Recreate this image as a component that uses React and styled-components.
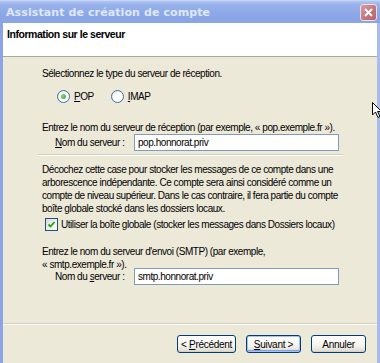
import React from "react";
import styled, { createGlobalStyle } from "styled-components";

const Global = createGlobalStyle`
  html, body { margin: 0; padding: 0; background: #ece9d8; }
  body { font-family: "Liberation Sans", Arial, sans-serif; font-size: 10px; letter-spacing: -0.45px; color: #000; }
  #root { width: 380px; height: 363px; overflow: hidden; }
`;

const Window = styled.div`
  position: relative;
  width: 380px;
  height: 363px;
  display: flex;
  flex-direction: column;
  overflow: hidden;
`;

const TitleBar = styled.div`
  height: 23px;
  flex: none;
  display: flex;
  align-items: center;
  justify-content: space-between;
  padding: 0 3px 0 6px;
  background: linear-gradient(#b3c7f2 0%, #9bb3ec 15%, #8ca7e7 60%, #8aa4e4 100%);
  border-top: 1px solid #c6d5f6;
  box-sizing: border-box;
`;

const Title = styled.span`
  color: #dfe8fb;
  font-family: "DejaVu Sans", "Liberation Sans", sans-serif;
  font-weight: bold;
  font-size: 11px;
  letter-spacing: 0.1px;
  white-space: nowrap;
`;

const CloseBtn = styled.div`
  width: 17px;
  height: 17px;
  border-radius: 3px;
  border: 1px solid #e9dfe8;
  background: linear-gradient(135deg, #d99ba0, #c2727b 60%, #b8646e);
  display: flex;
  align-items: center;
  justify-content: center;
  box-sizing: border-box;
`;

const Frame = styled.div`
  flex: 1;
  display: flex;
  flex-direction: column;
  border-left: 3px solid #8ca3e6;
  border-right: 3px solid #a9bbee;
  background: #ece9d8;
  min-height: 0;
`;

const Header = styled.div`
  height: 34px;
  flex: none;
  background: #fff;
  border-bottom: 1px solid #aca899;
  padding: 5px 0 0 4px;
  box-sizing: border-box;
  font-weight: bold;
  font-size: 10.5px;
  letter-spacing: -0.45px;
  white-space: nowrap;
`;

const Body = styled.div`
  flex: 1;
  display: flex;
  flex-direction: column;
  padding: 10px 0 0 39px;
  min-height: 0;
`;

const Text = styled.div`
  line-height: 13px;
  white-space: nowrap;
  margin-top: ${(p) => p.$mt || 0}px;
`;

const RadioRow = styled.div`
  display: flex;
  align-items: center;
  margin: 10px 0 0 15px;
  height: 13px;
  white-space: nowrap;
`;

const RadioLabel = styled.label`
  display: flex;
  align-items: center;
  gap: 4px;
  margin-right: 17px;
`;

const RadioCircle = styled.span`
  width: 11px;
  height: 11px;
  border-radius: 50%;
  border: 1px solid #3c6fa8;
  background: radial-gradient(circle at 60% 60%, #fff 40%, #dcdad0 100%);
  display: flex;
  align-items: center;
  justify-content: center;
  &::after {
    content: "";
    width: 5px;
    height: 5px;
    border-radius: 50%;
    background: ${(p) => (p.$checked ? "radial-gradient(circle at 40% 40%, #7ce07c, #2a9a2a)" : "transparent")};
  }
`;

const U = styled.span`
  text-decoration: underline;
`;

const FieldRow = styled.div`
  display: flex;
  align-items: center;
  margin: ${(p) => p.$mt || 0}px 0 0 13px;
  white-space: nowrap;
`;

const FieldLabel = styled.span`
  width: 79px;
  flex: none;
`;

const Input = styled.div`
  width: 205px;
  height: 17px;
  box-sizing: border-box;
  border: 1px solid #7f9db9;
  background: #fff;
  padding: 0 3px;
  line-height: 15px;
`;

const Separator = styled.div`
  height: 1px;
  background: #d4d0c0;
  border-bottom: 1px solid #fff;
  margin: ${(p) => p.$m};
`;

const CheckRow = styled.label`
  display: flex;
  align-items: center;
  gap: 3px;
  margin: 3px 0 0 3px;
  white-space: nowrap;
`;

const CheckBox = styled.span`
  width: 11px;
  height: 11px;
  flex: none;
  border: 1px solid #1c5180;
  background: linear-gradient(135deg, #dcdad0, #fff);
  display: flex;
  align-items: center;
  justify-content: center;
`;

const Footer = styled.div`
  flex: none;
  display: flex;
  flex-direction: column;
`;

const ButtonRow = styled.div`
  display: flex;
  justify-content: flex-end;
  gap: 10px;
  padding: 10px 11px 10px 0;
`;

const Button = styled.button`
  font-family: "Liberation Sans", Arial, sans-serif;
  font-size: 10px;
  letter-spacing: -0.3px;
  color: #000;
  white-space: nowrap;
  width: ${(p) => p.$w}px;
  height: 18px;
  padding: 0;
  border: 1px solid #003c74;
  border-radius: 3px;
  background: linear-gradient(#fff 0%, #f4f3ee 60%, #dcd9cc 100%);
  box-shadow: ${(p) =>
    p.$default ? "inset 0 0 0 1px #a9c3ee, inset 0 -1px 0 1px #7fa0e3" : "inset 0 -1px 0 #d6d0c5"};
`;

const Cursor = styled.svg`
  position: absolute;
  left: 372px;
  top: 102px;
`;

export default function App() {
  return (
    <>
      <Global />
      <Window>
        <TitleBar>
          <Title>Assistant de création de compte</Title>
          <CloseBtn>
            <svg width="9" height="9" viewBox="0 0 9 9">
              <path d="M1 1 L8 8 M8 1 L1 8" stroke="#fff" strokeWidth="1.8" />
            </svg>
          </CloseBtn>
        </TitleBar>
        <Frame>
          <Header>Information sur le serveur</Header>
          <Body>
            <Text>Sélectionnez le type du serveur de réception.</Text>
            <RadioRow>
              <RadioLabel>
                <RadioCircle $checked />
                <span><U>P</U>OP</span>
              </RadioLabel>
              <RadioLabel>
                <RadioCircle />
                <span><U>I</U>MAP</span>
              </RadioLabel>
            </RadioRow>
            <Text $mt={18}>Entrez le nom du serveur de réception (par exemple, « pop.exemple.fr »).</Text>
            <FieldRow $mt={0}>
              <FieldLabel><U>N</U>om du serveur :</FieldLabel>
              <Input>pop.honnorat.priv</Input>
            </FieldRow>
            <Separator $m="3px 34px 0 -4px" />
            <Text $mt={7}>
              Décochez cette case pour stocker les messages de ce compte dans une
              <br />
              arborescence indépendante. Ce compte sera ainsi considéré comme un
              <br />
              compte de niveau supérieur. Dans le cas contraire, il fera partie du compte
              <br />
              boîte globale stocké dans les dossiers locaux.
            </Text>
            <CheckRow>
              <CheckBox>
                <svg width="9" height="9" viewBox="0 0 9 9">
                  <path d="M1.5 4.5 L3.5 6.5 L7.5 2" stroke="#21a121" strokeWidth="1.8" fill="none" />
                </svg>
              </CheckBox>
              <span>Utiliser la boîte globale (stocker les messages dans Dossiers locaux)</span>
            </CheckRow>
            <Text $mt={14}>
              Entrez le nom du serveur d'envoi (SMTP) (par exemple,
              <br />
              « smtp.exemple.fr »).
            </Text>
            <FieldRow $mt={-3}>
              <FieldLabel>Nom du <U>s</U>erveur :</FieldLabel>
              <Input>smtp.honnorat.priv</Input>
            </FieldRow>
          </Body>
          <Footer>
            <Separator $m="0" />
            <ButtonRow>
              <Button $w={59}>&lt; <U>P</U>récédent</Button>
              <Button $w={55} $default><U>S</U>uivant &gt;</Button>
              <Button $w={55}>Annuler</Button>
            </ButtonRow>
          </Footer>
        </Frame>
        <Cursor width="10" height="17" viewBox="0 0 10 17">
          <path d="M0.5 0.5 L0.5 13 L3.5 10 L6 15.5 L8 14.5 L5.5 9.5 L9.5 9.5 Z" fill="#fff" stroke="#000" strokeWidth="1" />
        </Cursor>
      </Window>
    </>
  );
}
